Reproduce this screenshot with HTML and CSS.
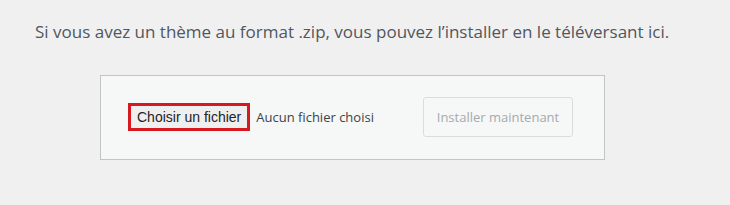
FILE: index.html
```html
<!DOCTYPE html>
<html>
<head>
    <meta charset="UTF-8">
    <title>Téléverser un thème</title>
    <link rel="stylesheet" href="styles.css">
</head>
<body>
    <div class="upload-theme">
        <p class="install-help">Si vous avez un thème au format .zip, vous pouvez l’installer en le téléversant ici.</p>

        <form class="upload-form">
            <label class="file-picker">
                <span class="file-button">Choisir un fichier</span>
                <span class="file-name">Aucun fichier choisi</span>
            </label>
            <button type="button" class="btn btn-disabled" disabled>Installer maintenant</button>
        </form>
    </div>
</body>
</html>
```

FILE: styles.css
```css
body {
    font-family: "Open Sans", "Noto Sans", sans-serif;
    margin: 0;
    background-color: #f0f0f1;
    color: #50575e;
}

.upload-theme {
    padding: 18px 0 0 35px;
}

.install-help {
    margin: 0;
    font-size: 17px;
    line-height: 28px;
    color: #50575e;
}

.upload-form {
    display: flex;
    align-items: center;
    width: 445px;
    margin: 29px 0 0 65px;
    padding: 21px 31px 22px 27px;
    background-color: #f6f7f7;
    border: 1px solid #c3c4c7;
}

.file-picker {
    display: flex;
    align-items: center;
    flex: 1;
}

.file-button {
    font-family: "Liberation Sans", Arial, sans-serif;
    font-size: 14px;
    color: #1d2327;
    background-color: #efefef;
    padding: 3px 6px;
    border: 3px solid #d7191f;
}

.file-name {
    margin-left: 6px;
    font-size: 13px;
    color: #3c434a;
}

.btn {
    font-family: inherit;
    font-size: 13px;
    padding: 0 12px;
    height: 40px;
    border-radius: 3px;
}

.btn-disabled {
    width: 150px;
    color: #a7aaad;
    background-color: #f6f7f7;
    border: 1px solid #dcdcde;
}
```
